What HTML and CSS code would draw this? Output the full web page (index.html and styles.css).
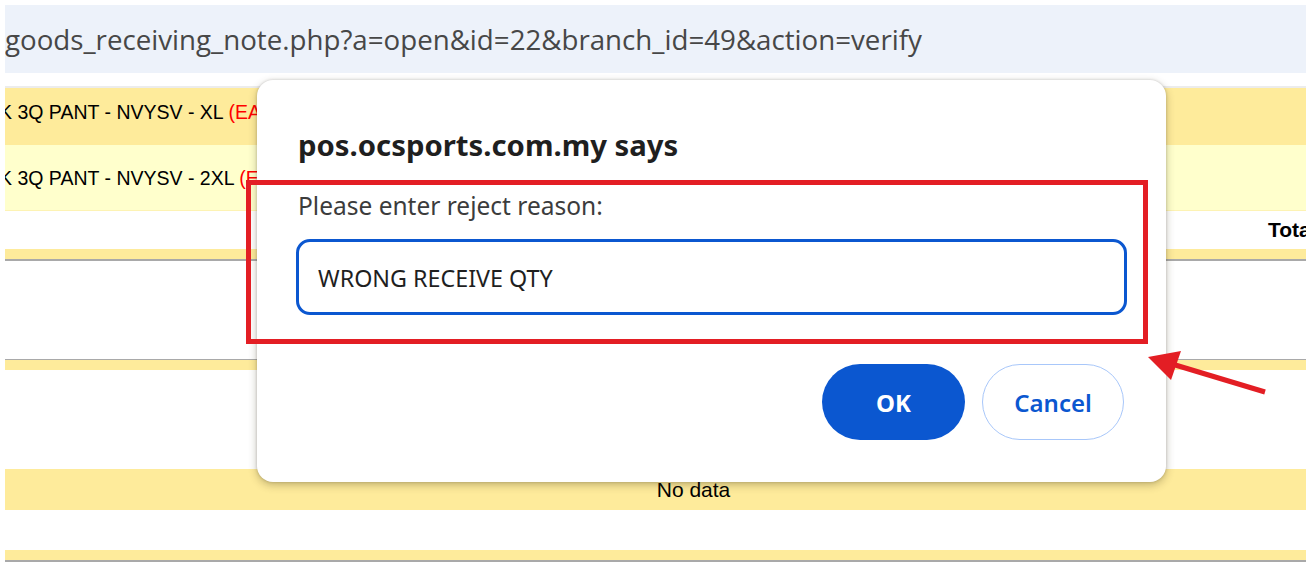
FILE: index.html
```html
<!DOCTYPE html>
<html>
<head>
<meta charset="utf-8">
<link rel="stylesheet" href="styles.css">
</head>
<body>
<div class="page">
  <div class="urlbar">goods_receiving_note.php?a=open&amp;id=22&amp;branch_id=49&amp;action=verify</div>
  <div class="table">
    <div class="row row-item row-a"><span class="item">SK 3Q PANT - NVYSV - XL <span class="unit">(EA)</span></span></div>
    <div class="row row-item row-b"><span class="item">SK 3Q PANT - NVYSV - 2XL <span class="unit">(EA)</span></span></div>
    <div class="row row-total"><span class="total">Total</span></div>
    <div class="band band-lined"></div>
    <div class="blank blank-lined"></div>
    <div class="band"></div>
    <div class="blank"></div>
    <div class="row row-nodata">No data</div>
    <div class="blank blank-short"></div>
    <div class="band band-lined"></div>
  </div>

  <div class="dialog">
    <div class="dialog-title">pos.ocsports.com.my says</div>
    <div class="dialog-label">Please enter reject reason:</div>
    <div class="dialog-input">WRONG RECEIVE QTY</div>
    <div class="dialog-actions">
      <button class="btn btn-ok">OK</button>
      <button class="btn btn-cancel">Cancel</button>
    </div>
  </div>

  <svg class="annot" width="1306" height="568" viewBox="0 0 1306 568">
    <rect x="248.5" y="182.5" width="897" height="159" fill="none" stroke="#e31e24" stroke-width="5"/>
    <line x1="1265" y1="392" x2="1172" y2="364" stroke="#e31e24" stroke-width="5"/>
    <polygon points="1148,357 1181,351 1171,380" fill="#e31e24"/>
  </svg>
</div>
</body>
</html>
```

FILE: styles.css
```css
html, body {
  margin: 0;
  padding: 0;
  background: #ffffff;
}

.page {
  position: relative;
  width: 1306px;
  height: 568px;
  overflow: hidden;
  padding: 5px 0 0 5px;
  box-sizing: border-box;
}

.urlbar {
  height: 68px;
  background: #edf2fa;
  font-family: "Open Sans", "Noto Sans", sans-serif;
  font-size: 27.7px;
  line-height: 68px;
  color: #474747;
  white-space: nowrap;
  overflow: hidden;
}

.table {
  margin-top: 13px;
  width: 1377px;
  font-family: "Liberation Sans", Arial, sans-serif;
  font-size: 19.5px;
  color: #000;
  border-top: 2px solid #ececec;
}

.row {
  display: flex;
  align-items: center;
  white-space: nowrap;
}

.row-item {
  overflow: hidden;
  align-items: flex-start;
  box-sizing: border-box;
}

.item {
  margin-left: -19px;
}

.unit {
  color: #ff0000;
}

.row-a {
  height: 57px;
  padding-top: 13px;
  background: #feeb9b;
}

.row-b {
  height: 66px;
  padding-top: 22px;
  background: #ffffcc;
  border-bottom: 1px solid #fdf3b4;
}

.row-total {
  height: 38px;
  background: #ffffff;
}

.total {
  margin-left: 1263px;
  font-weight: bold;
  font-size: 21px;
}

.band {
  height: 10px;
  background: #feeb9b;
}

.band-lined {
  border-bottom: 2px solid #a9a9a9;
}

.blank {
  height: 99px;
  background: #ffffff;
}

.blank-lined {
  height: 98px;
  border-bottom: 1px solid #a9a9a9;
}

.blank-short {
  height: 40px;
}

.row-nodata {
  height: 41px;
  background: #feeb9b;
  justify-content: center;
  font-size: 21px;
}

.dialog {
  position: absolute;
  left: 257px;
  top: 80px;
  width: 909px;
  height: 402px;
  box-sizing: border-box;
  background: #ffffff;
  border-radius: 16px;
  box-shadow: 0 3px 8px rgba(60, 50, 20, 0.3), 0 0 3px rgba(0, 0, 0, 0.18);
  padding: 47px 39px 0 39px;
  font-family: "Noto Sans", "Open Sans", sans-serif;
  color: #1f1f1f;
}

.dialog-title {
  font-size: 29.3px;
  font-weight: 700;
  line-height: 36px;
  padding-left: 2px;
}

.dialog-label {
  margin-top: 27px;
  font-size: 24.5px;
  line-height: 32px;
  color: #3c3c3c;
  padding-left: 2px;
}

.dialog-input {
  margin-top: 17px;
  height: 76px;
  box-sizing: border-box;
  border: 3.5px solid #0b57d0;
  border-radius: 14px;
  padding-left: 19px;
  padding-top: 2px;
  display: flex;
  align-items: center;
  font-size: 23.3px;
  color: #1f1f1f;
}

.dialog-actions {
  margin-top: 49px;
  display: flex;
  justify-content: flex-end;
  gap: 17px;
  padding-right: 3px;
}

.btn {
  height: 76px;
  border-radius: 38px;
  font-family: "Noto Sans", "Open Sans", sans-serif;
  font-size: 24px;
  font-weight: 600;
  padding: 0;
  cursor: pointer;
}

.btn-ok {
  width: 143px;
  background: #0b57d0;
  color: #ffffff;
  border: none;
  font-weight: 700;
}

.btn-cancel {
  width: 142px;
  background: #ffffff;
  color: #0b57d0;
  border: 1.5px solid #a8c7fa;
}

.annot {
  position: absolute;
  left: 0;
  top: 0;
  pointer-events: none;
}
```
